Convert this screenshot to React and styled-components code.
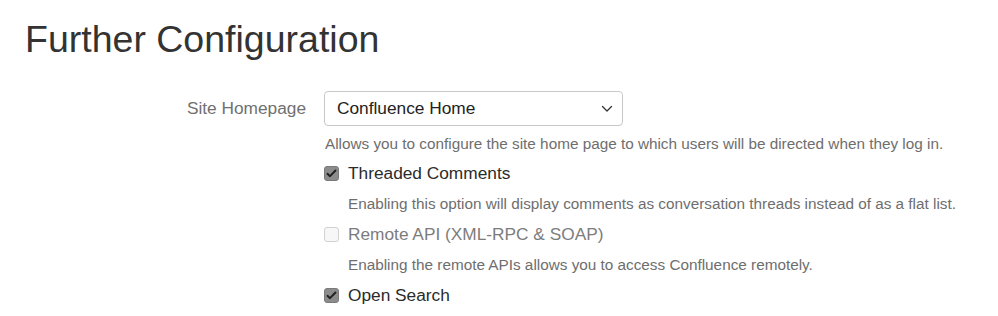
import React from 'react'
import styled, { createGlobalStyle } from 'styled-components'

const GlobalStyle = createGlobalStyle`
  body {
    margin: 0;
    background: #fff;
    font-family: "Liberation Sans", Arial, sans-serif;
  }
`;

const Page = styled.div`
  padding: 17px 25px 0 25px;
`;

const Title = styled.h1`
  margin: 0 0 30px 0;
  font-size: 37.5px;
  font-weight: 400;
  line-height: 44px;
  color: #333;
`;

const Form = styled.div`
  display: grid;
  grid-template-columns: 281px 1fr;
  column-gap: 18px;
`;

const Label = styled.div`
  text-align: right;
  font-size: 17.3px;
  color: #707070;
  line-height: 35px;
`;

const Field = styled.div`
  display: flex;
  flex-direction: column;
`;

const Select = styled.div`
  width: 299px;
  height: 35px;
  box-sizing: border-box;
  border: 1px solid #c8c8c8;
  border-radius: 4px;
  display: flex;
  align-items: center;
  justify-content: space-between;
  padding: 0 9px 0 12px;
  font-size: 17.3px;
  color: #222;
`;

const Help = styled.div`
  font-size: 15.3px;
  color: #6e6e6e;
  line-height: 20px;
  white-space: nowrap;
  margin: ${p => (p.first ? '8px 0 0 1px' : '6px 0 0 24px')};
  padding-bottom: ${p => (p.first ? '4px' : '0')};
`;

const CheckRow = styled.label`
  display: flex;
  align-items: center;
  height: 30px;
  margin-top: ${p => (p.gap ? '5px' : '0')};
`;

const Box = styled.span`
  width: 15px;
  height: 15px;
  box-sizing: border-box;
  border-radius: 3px;
  margin-right: 9px;
  display: flex;
  align-items: center;
  justify-content: center;
  background: ${p => (p.checked ? '#8c8c8c' : '#f7f7f7')};
  border: 1px solid ${p => (p.checked ? '#7a7a7a' : '#d2d2d2')};
`;

const CheckText = styled.span`
  font-size: 17.3px;
  color: ${p => (p.disabled ? '#7c7c7c' : '#2b2b2b')};
`;

const Chevron = () => (
  <svg width="12" height="8" viewBox="0 0 12 8" fill="none">
    <path d="M1.5 1.5 L6 6 L10.5 1.5" stroke="#333" strokeWidth="1.3" strokeLinecap="round" strokeLinejoin="round" />
  </svg>
);

const Check = () => (
  <svg width="11" height="9" viewBox="0 0 11 9" fill="none">
    <path d="M1.5 4.8 L4 7.2 L9.5 1.5" stroke="#1f1f1f" strokeWidth="1.9" strokeLinecap="round" strokeLinejoin="round" />
  </svg>
);

const Checkbox = ({ checked, disabled, label, gap }) => (
  <CheckRow gap={gap}>
    <Box checked={checked}>{checked && <Check />}</Box>
    <CheckText disabled={disabled}>{label}</CheckText>
  </CheckRow>
);

export default function App() {
  return (
    <Page>
      <GlobalStyle />
      <Title>Further Configuration</Title>
      <Form>
        <Label>Site Homepage</Label>
        <Field>
          <Select>
            <span>Confluence Home</span>
            <Chevron />
          </Select>
          <Help first>Allows you to configure the site home page to which users will be directed when they log in.</Help>
          <Checkbox checked label="Threaded Comments" />
          <Help>Enabling this option will display comments as conversation threads instead of as a flat list.</Help>
          <Checkbox gap disabled label="Remote API (XML-RPC & SOAP)" />
          <Help>Enabling the remote APIs allows you to access Confluence remotely.</Help>
          <Checkbox gap checked label="Open Search" />
        </Field>
      </Form>
    </Page>
  )
}
